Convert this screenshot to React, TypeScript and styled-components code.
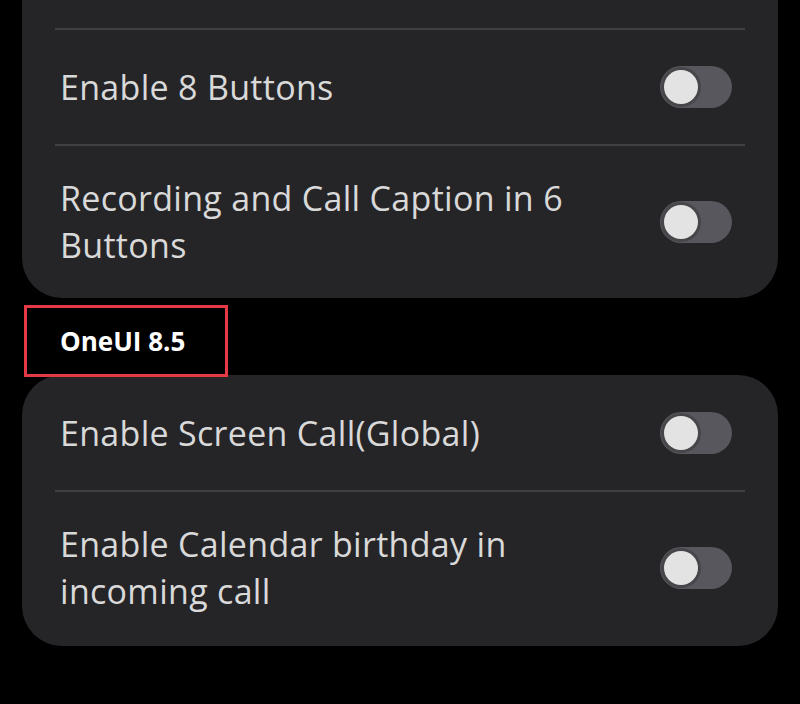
import React from "react";
import styled, { createGlobalStyle } from "styled-components";

const GlobalStyle = createGlobalStyle`
  html, body {
    margin: 0;
    padding: 0;
    background: #000;
  }
  body {
    font-family: "Open Sans", "Noto Sans", sans-serif;
    -webkit-font-smoothing: antialiased;
  }
`;

type Item = {
  label: string;
  on?: boolean;
};

type Section = {
  title?: string;
  cut?: boolean;
  items: Item[];
};

const sections: Section[] = [
  {
    cut: true,
    items: [
      { label: "Enable 8 Buttons" },
      { label: "Recording and Call Caption in 6 Buttons" },
    ],
  },
  {
    title: "OneUI 8.5",
    items: [
      { label: "Enable Screen Call(Global)" },
      { label: "Enable Calendar birthday in incoming call" },
    ],
  },
];

function Toggle({ on = false }: { on?: boolean }) {
  return (
    <Track $on={on} role="switch" aria-checked={on}>
      <Knob $on={on} />
    </Track>
  );
}

export default function App() {
  return (
    <>
      <GlobalStyle />
      <Page>
        {sections.map((section, i) => (
          <React.Fragment key={i}>
            {section.title && (
              <Header>
                <HeaderLabel>{section.title}</HeaderLabel>
              </Header>
            )}
            <Card $cut={section.cut}>
              {section.items.map((item, j) => (
                <React.Fragment key={item.label}>
                  {(j > 0 || section.cut) && <Divider />}
                  <Row>
                    <Label>{item.label}</Label>
                    <Toggle on={item.on} />
                  </Row>
                </React.Fragment>
              ))}
            </Card>
          </React.Fragment>
        ))}
      </Page>
    </>
  );
}

const Page = styled.div`
  width: 800px;
  height: 704px;
  overflow: hidden;
  background: #000;
  padding: 0 22px;
  box-sizing: border-box;
  display: flex;
  flex-direction: column;
`;

const Card = styled.div<{ $cut?: boolean }>`
  background: #252528;
  border-radius: ${(p) => (p.$cut ? "0 0 40px 40px" : "40px")};
  padding: ${(p) => (p.$cut ? "28px 0 0" : "1px 0 2px")};
  display: flex;
  flex-direction: column;
`;

const Divider = styled.div`
  height: 2px;
  margin: 0 33px;
  background: #404044;
`;

const Row = styled.div`
  min-height: 114px;
  box-sizing: border-box;
  padding: 29px 46px 29px 38px;
  display: flex;
  align-items: center;
  justify-content: space-between;
  gap: 40px;
`;

const Label = styled.div`
  color: #d9d9d9;
  font-size: 34px;
  line-height: 47px;
  max-width: 530px;
  letter-spacing: 0.3px;
`;

const Header = styled.div`
  height: 77px;
  padding-top: 7px;
  box-sizing: border-box;
`;

const HeaderLabel = styled.div`
  width: 204px;
  height: 72px;
  margin-left: 2px;
  box-sizing: border-box;
  border: 3px solid #e53945;
  padding-left: 33px;
  display: flex;
  align-items: center;
  color: #fff;
  font-weight: 700;
  font-size: 26px;
  position: relative;
  z-index: 1;
`;

const Track = styled.div<{ $on: boolean }>`
  flex: none;
  width: 72px;
  height: 42px;
  border-radius: 21px;
  background: ${(p) => (p.$on ? "#3e91ff" : "#57575d")};
  display: flex;
  align-items: center;
  justify-content: ${(p) => (p.$on ? "flex-end" : "flex-start")};
  padding: 0 4px;
  box-sizing: border-box;
`;

const Knob = styled.div<{ $on: boolean }>`
  width: 34px;
  height: 34px;
  border-radius: 50%;
  background: #e3e3e3;
  box-shadow: 0 0 0 3px #47474b;
`;
